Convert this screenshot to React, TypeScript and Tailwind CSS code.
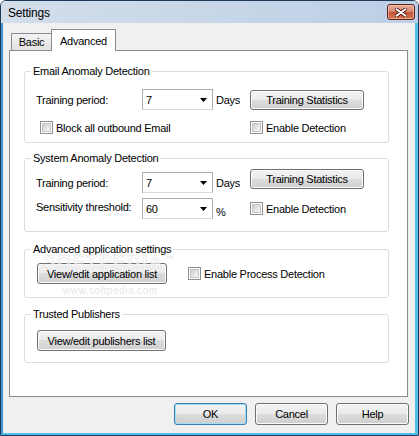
import type { ReactNode } from "react";

const BTN =
  "flex items-center justify-center border border-[#707070] rounded-[3px] bg-[linear-gradient(to_bottom,#f2f2f2_0%,#ebebeb_48%,#dddddd_50%,#cfcfcf_100%)] shadow-[inset_0_0_0_1px_#fbfbfb]";

function Button({ children, className = "" }: { children: ReactNode; className?: string }) {
  return (
    <button type="button" className={`${BTN} ${className}`}>
      {children}
    </button>
  );
}

function Combo({ value }: { value: string }) {
  return (
    <div className="flex items-center w-[71px] h-[21px] shrink-0 border border-[#abadb3] border-b-[#d5d9e0] bg-white pl-[3px] pr-[5px]">
      <span className="flex-1">{value}</span>
      <svg width="7" height="4" viewBox="0 0 7 4">
        <path d="M0 0h7L3.5 4z" fill="#000" />
      </svg>
    </div>
  );
}

function Check({ label, className = "" }: { label: string; className?: string }) {
  return (
    <label className={`flex items-center gap-[3px] ${className}`}>
      <span className="w-[13px] h-[13px] shrink-0 border border-[#8e8f8f] bg-white p-[1px]">
        <span className="block w-full h-full border border-[#c3c6cb] bg-[linear-gradient(135deg,#cbced3,#f8f8f8)]" />
      </span>
      <span>{label}</span>
    </label>
  );
}

function Group({ title, className = "", children }: { title: string; className?: string; children: ReactNode }) {
  return (
    <fieldset className={`ml-[14px] w-[365px] border border-[#d5dfe5] rounded-[3px] px-0 ${className}`}>
      <legend className="ml-[6px] px-[2px] leading-[14px]">{title}</legend>
      {children}
    </fieldset>
  );
}

export default function App() {
  return (
    <div className="relative w-[419px] h-[436px] bg-white font-['Liberation_Sans',Arial,sans-serif] text-[11px] leading-[14px] tracking-[-0.25px] text-black">
      <div className="flex flex-col w-full h-full border border-[#1f3a56] rounded-t-[6px] overflow-hidden">
        {/* Title bar */}
        <div className="flex items-start justify-between h-[22px] shrink-0 bg-[linear-gradient(to_right,#d3deea,#bccfe6)]">
          <span className="pl-[7px] pt-[5px] text-[12px] tracking-[-0.2px]">Settings</span>
          <div className="mt-[3px] mr-[3px] flex items-center justify-center w-[28px] h-[16px] rounded-[3px] border border-[#5d2118] bg-[linear-gradient(to_bottom,#e7ab98_0%,#d98d74_45%,#c5533b_52%,#d3764f_100%)] shadow-[inset_0_0_0_1px_rgba(255,220,210,0.5)]">
            <svg width="12" height="9" viewBox="0 0 12 9">
              <path d="M1.5 1.2L10.5 7.8M10.5 1.2L1.5 7.8" stroke="#4a1510" strokeWidth="3.6" strokeLinecap="round" />
              <path d="M1.5 1.2L10.5 7.8M10.5 1.2L1.5 7.8" stroke="#ffffff" strokeWidth="2" strokeLinecap="round" />
            </svg>
          </div>
        </div>

        {/* Client area */}
        <div className="flex-1 flex flex-col bg-[#f0f0f0] border-l-2 border-r-3 border-b-2 border-l-[#3f95cf] border-r-[#52bde6] border-b-[#52bde6]">
          {/* Tabs */}
          <div className="flex items-end h-[21px] mt-[6px] ml-[8px]">
            <div className="flex items-center justify-center w-[41px] h-[17px] border border-b-0 border-[#898c95] bg-[linear-gradient(to_bottom,#f3f3f3,#e2e2e2)]">
              Basic
            </div>
            <div className="relative z-10 -ml-px mb-[-1px] flex items-center justify-center w-[65px] h-[22px] border border-b-0 border-[#898c95] bg-white">
              Advanced
            </div>
          </div>

          {/* Tab panel */}
          <div className="ml-[6px] w-[399px] h-[347px] border border-[#898c95] bg-white">
            <Group title="Email Anomaly Detection" className="mt-[13px]">
              <div className="pl-[11px] pt-[11px] pb-[8px]">
                <div className="flex items-center h-[21px]">
                  <span className="w-[106px] shrink-0">Training period:</span>
                  <Combo value="7" />
                  <span className="ml-[3px] w-[34px] shrink-0">Days</span>
                  <Button className="w-[114px] h-[20px]">Training Statistics</Button>
                </div>
                <div className="flex items-center h-[13px] mt-[11px]">
                  <Check label="Block all outbound Email" className="ml-[4px] w-[210px]" />
                  <Check label="Enable Detection" />
                </div>
              </div>
            </Group>

            <Group title="System Anomaly Detection" className="mt-[8px]">
              <div className="pl-[11px] pt-[7px] pb-[12px]">
                <div className="flex items-center h-[21px]">
                  <span className="w-[106px] shrink-0">Training period:</span>
                  <Combo value="7" />
                  <span className="ml-[3px] w-[34px] shrink-0">Days</span>
                  <Button className="w-[114px] h-[20px] mb-[8px]">Training Statistics</Button>
                </div>
                <div className="flex items-center h-[21px] mt-[5px]">
                  <span className="w-[106px] shrink-0 mb-[4px]">Sensitivity threshold:</span>
                  <Combo value="60" />
                  <span className="ml-[3px] w-[34px] shrink-0 self-end">%</span>
                  <Check label="Enable Detection" />
                </div>
              </div>
            </Group>

            <Group title="Advanced application settings" className="mt-[10px]">
              <div className="flex items-center pl-[11px] pt-[7px] pb-[13px]">
                <Button className="ml-[1px] w-[130px] h-[21px]">View/edit application list</Button>
                <Check label="Enable Process Detection" className="ml-[21px]" />
              </div>
            </Group>

            <Group title="Trusted Publishers" className="mt-[9px]">
              <div className="pl-[11px] pt-[9px] pb-[11px]">
                <Button className="ml-[1px] w-[129px] h-[21px]">View/edit publishers list</Button>
              </div>
            </Group>
          </div>

          {/* Dialog buttons */}
          <div className="flex justify-end gap-[8px] mt-[6px] pr-[6px]">
            <button
              type="button"
              className="flex items-center justify-center w-[73px] h-[22px] border border-[#3c7fb1] rounded-[3px] bg-[linear-gradient(to_bottom,#f2f2f2_0%,#ebebeb_48%,#dddddd_50%,#cfcfcf_100%)] shadow-[inset_0_0_0_1px_#9fdcf5]"
            >
              OK
            </button>
            <Button className="w-[73px] h-[22px]">Cancel</Button>
            <Button className="w-[73px] h-[22px]">Help</Button>
          </div>
        </div>
      </div>

      {/* Watermark overlay */}
      <div className="pointer-events-none absolute left-[43px] top-[256px] text-[18px] leading-[13px] font-bold tracking-[2px] text-white/60 [-webkit-text-stroke:0.6px_#e2e2e2]">
        SOFTPEDIA
      </div>
      <div className="pointer-events-none absolute left-[166px] top-[256px] text-[7px] leading-[6px] text-[#e0e0e0]">™</div>
      <div className="pointer-events-none absolute left-[63px] top-[286px] text-[10px] leading-[9px] tracking-[0.5px] text-[#e6e6e6]">
        www.softpedia.com
      </div>
    </div>
  );
}
